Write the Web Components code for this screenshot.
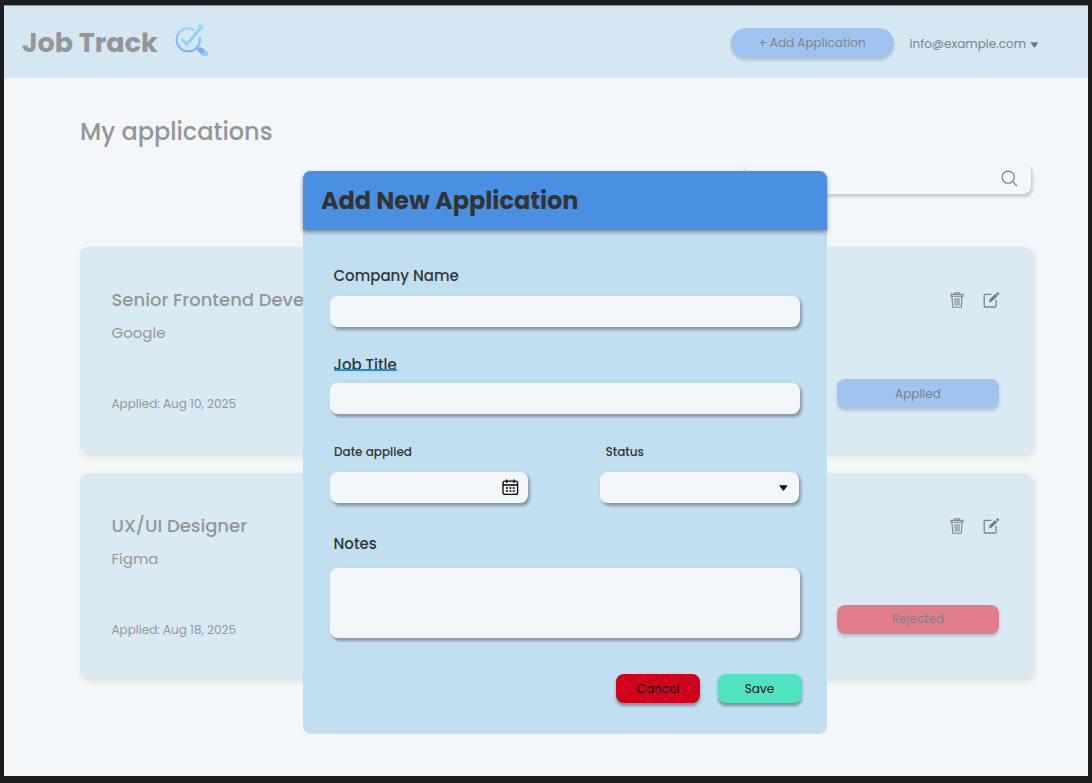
<!DOCTYPE html>
<html lang="en">
<head>
<meta charset="utf-8">
<title>Job Track</title>
<style>
html,body{margin:0;height:100%}
body{background:#1e1e1e;overflow:hidden;font-family:Poppins,Inter,sans-serif;color:#959697}
</style>
</head>
<body>
<job-app></job-app>
<script>
const define = (name, html, setup) => {
  const t = document.createElement('template');
  t.innerHTML = html;
  customElements.define(name, class extends HTMLElement {
    connectedCallback() {
      if (this.shadowRoot) return;
      this.attachShadow({mode: 'open'}).append(t.content.cloneNode(true));
      if (setup) setup(this, this.shadowRoot);
    }
  });
};

/* A single line of text; "size" in px and "weight" come from attributes. */
define('text-line', `<style>
:host{display:block;white-space:nowrap;width:max-content;line-height:20px}
</style><slot></slot>`, el => {
  el.style.fontSize = el.getAttribute('size') + 'px';
  el.style.fontWeight = el.getAttribute('weight') || 400;
});

define('app-logo', `<style>:host{display:block;width:36px;height:36px}svg{display:block}</style>
<svg width="36" height="36" viewBox="0 0 36 36" fill="none">
<defs><linearGradient id="g" x1="20" y1="4" x2="14" y2="31" gradientUnits="userSpaceOnUse"><stop stop-color="#9bdcfa"/><stop offset="1" stop-color="#7fb2f1"/></linearGradient></defs>
<path d="M20.3 7.9A11.6 11.6 0 1 0 25.4 14.5" stroke="url(#g)" stroke-width="2.3"/>
<path d="M7.6 17L12.8 22.2L27.4 5" stroke="#8fd3f8" stroke-width="3"/>
<path d="M29.7 1L28.6 8.4L23.2 3.6Z" fill="#9adcfa"/>
<path d="M22.3 25.2L25.6 28" stroke="#7fb2f1" stroke-width="2.2"/>
<path d="M26.5 28L30.3 31" stroke="#7baff1" stroke-width="5.4" stroke-linecap="round"/>
<circle cx="31.8" cy="31.6" r="2.7" fill="#92d4f8"/></svg>`);

define('app-button', `<style>
:host{display:flex;align-items:center;justify-content:center;box-sizing:border-box;width:var(--w);height:var(--h,29px);border-radius:var(--r,8px);background:var(--bg);box-shadow:0 2.5px 3px rgba(0,0,0,var(--s,.16))}
</style><slot></slot>`);

define('app-field', `<style>
:host{display:flex;align-items:center;justify-content:flex-end;box-sizing:border-box;width:var(--w,470.5px);height:var(--h,31px);padding-right:var(--pr,9px);border-radius:8px;background:#f3f7fa;box-shadow:2px 2.5px 3px rgba(0,0,0,var(--s,.32))}
</style><slot></slot>`);

define('app-header', `<style>
:host{display:flex;align-items:center;height:73px;box-sizing:border-box;background:#d5e7f3;padding:2px 48.5px 0 18px;border-top:1px solid #8b9298}
app-logo{margin:-6px 0 0 16px}
app-button{--w:163px;--h:30px;--r:15px;--bg:#a0c4ef;margin:-1px 16px 0 auto;color:#7d858f}
app-button text-line{padding-top:1px}
.user{display:flex;align-items:center;gap:4px;margin-top:2px;color:#7d8388}
.user svg{margin-top:2px}
</style>
<text-line size="27" weight="700">Job Track</text-line>
<app-logo></app-logo>
<app-button><text-line size="12">+ Add Application</text-line></app-button>
<div class="user"><text-line size="12">info@example.com</text-line>
<svg width="9" height="6"><path d="M.3.3H8.4L4.9 5.5H3.9Z" fill="#72787b"/></svg></div>`);

define('job-card', `<style>
:host{display:flex;justify-content:space-between;box-sizing:border-box;width:952px;height:205.7px;padding:43px 33px 0 31.5px;border-radius:8px;background:#daeaf5;box-shadow:2px 3px 6px rgba(0,0,0,.11)}
.company{margin:13px 0 51px}
.side{display:flex;flex-direction:column;justify-content:space-between;align-items:flex-end;height:118px}
.icons{display:flex;gap:19px;height:20px;align-items:center;margin-right:-1px;padding-top:.4px}
app-button{--w:162px;color:#7b8087}
app-button text-line{padding-top:.6px}
</style>
<div>
<text-line size="18" weight="500"><slot name="heading"></slot></text-line>
<text-line size="15" class="company"><slot name="company"></slot></text-line>
<text-line size="12"><slot name="date"></slot></text-line>
</div>
<div class="side"><div class="icons">
<svg width="14" height="16" viewBox="0 0 14 16" fill="none" stroke="#7d858a" stroke-width="1.1"><path d="M1 2.4H13V4.2H1ZM4.7 2.2V.7H9.3V2.2M2 4.5L2.7 15.2H11.3L12 4.5M5 6V13.4M7 6V13.4M9 6V13.4"/></svg>
<svg width="17" height="16" viewBox="0 0 17 16" fill="none" stroke="#7d858a" stroke-width="1.3"><path d="M8.5 2.4H2.5Q1.2 2.4 1.2 3.7V13.7Q1.2 15 2.5 15H11.8Q13.1 15 13.1 13.7V7.8"/><path d="M5.9 10.2L6.7 7.3L12.3 2L14.4 4.1L8.8 9.4Z" fill="#747b80" stroke="none"/><path d="M13 1.4L14 .6Q15.1 0 15.8 .8Q16.6 1.6 15.9 2.5L15 3.4Z" fill="#747b80" stroke="none"/></svg>
</div><app-button><text-line size="12"><slot name="status"></slot></text-line></app-button></div>`, (el, root) => {
  root.querySelector('app-button').style.setProperty('--bg', el.getAttribute('tone'));
});

define('app-dialog', `<style>
:host{display:block;box-sizing:border-box;width:524.5px;height:563px;border-radius:8px;background:#c2dff1;color:#333638}
header{display:flex;align-items:center;height:59px;padding:1px 0 0 18.4px;box-sizing:border-box;border-radius:8px 8px 0 0;background:#4a90e2;color:#333;box-shadow:0 2px 4px rgba(0,0,0,.42)}
form{display:flex;flex-direction:column;padding:35.6px 0 0 27px}
.l{margin-left:4px}
.job{position:relative;margin:28px 0 8px 4px;width:63.5px}
.job i{position:absolute;left:0;right:0;top:14px;height:2px;background:#1490f4}
.row{display:flex;gap:72px;margin:28px 0 31px}
.row text-line{margin:0 0 9.6px 4.5px}
.row app-field{--w:198.5px}
.row svg{margin-top:1px}
.actions{display:flex;gap:17.5px;margin:36px 0 0 286.5px;color:#111}
app-button{--w:84px;--s:.35}
app-button text-line{padding-top:1px}
</style>
<header><text-line size="24" weight="700">Add New Application</text-line></header>
<form>
<text-line class="l" size="15" weight="500">Company Name</text-line>
<app-field style="margin-top:10.8px"></app-field>
<div class="job"><text-line size="15" weight="500">Job Title</text-line><i></i></div>
<app-field></app-field>
<div class="row">
<div><text-line size="12" weight="500">Date applied</text-line>
<app-field><svg width="17" height="17" viewBox="0 0 17 17" fill="none" stroke="#000" stroke-width="1.3"><rect x="1" y="2.2" width="14.6" height="13.2" rx="2"/><path d="M1 6H15.6M4.7.5V4M12 .5V4" /><path d="M4 9H12.9M4 12H12.9" stroke-width="1.5" stroke-dasharray="2 1.4"/></svg></app-field></div>
<div><text-line size="12" weight="500" style="margin-left:5.5px">Status</text-line>
<app-field style="--pr:11px"><svg width="9" height="6"><path d="M.2.2H8.6L4.9 5.6H3.9Z" fill="#000"/></svg></app-field></div>
</div>
<text-line class="l" size="15" weight="500">Notes</text-line>
<app-field style="--h:70px;margin-top:14px"></app-field>
<div class="actions">
<app-button style="--bg:#d0021b"><text-line size="12">Cancel</text-line></app-button>
<app-button style="--bg:#50e3c2"><text-line size="12">Save</text-line></app-button>
</div>
</form>`);

define('job-app', `<style>
:host{display:block;box-sizing:border-box;height:783px;padding:5px 4.5px 7.5px 4px}
.page{height:770.5px;background:#f3f7fa;box-sizing:border-box}
main{padding:43.5px 0 0 76px}
.filters{display:flex;justify-content:flex-end;gap:18px;width:951px;margin:22px 0 53.5px}
.filters app-field{--h:30px;--s:.17;--w:269px;--pr:13px}
.filters svg{margin-top:-1px}
.cards{display:flex;flex-direction:column;gap:20px}
app-dialog{position:absolute;left:302.5px;top:171px}
</style>
<div class="page">
<app-header></app-header>
<main>
<text-line size="24" weight="500">My applications</text-line>
<div class="filters"><app-field></app-field><app-field><svg width="17" height="17" viewBox="0 0 17 17" fill="none" stroke="#777c80" stroke-width="1.1"><circle cx="7.2" cy="7.2" r="6.1"/><path d="M11.6 11.6L16 16"/></svg></app-field></div>
<div class="cards">
<job-card tone="#a0c4ef"><span slot="heading">Senior Frontend Developer</span><span slot="company">Google</span><span slot="date">Applied: Aug 10, 2025</span><span slot="status">Applied</span></job-card>
<job-card tone="#e27e8b"><span slot="heading">UX/UI Designer</span><span slot="company">Figma</span><span slot="date">Applied: Aug 18, 2025</span><span slot="status">Rejected</span></job-card>
</div>
</main>
</div>
<app-dialog></app-dialog>`);
</script>
</body>
</html>
